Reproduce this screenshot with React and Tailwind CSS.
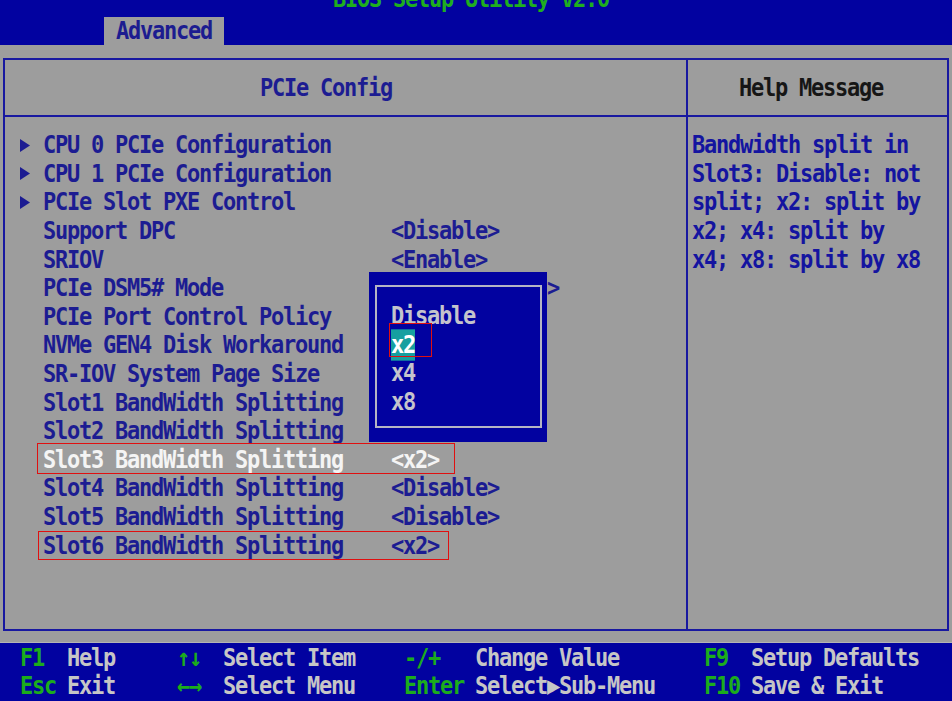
import React from 'react';

const rows = [
    { sub: true, label: 'CPU 0 PCIe Configuration' },
    { sub: true, label: 'CPU 1 PCIe Configuration' },
    { sub: true, label: 'PCIe Slot PXE Control' },
    { label: 'Support DPC', value: '<Disable>' },
    { label: 'SRIOV', value: '<Enable>' },
    { label: 'PCIe DSM5# Mode', value: '             >' },
    { label: 'PCIe Port Control Policy' },
    { label: 'NVMe GEN4 Disk Workaround' },
    { label: 'SR-IOV System Page Size' },
    { label: 'Slot1 BandWidth Splitting' },
    { label: 'Slot2 BandWidth Splitting' },
    { label: 'Slot3 BandWidth Splitting', value: '<x2>', active: true, mark: 'a' },
    { label: 'Slot4 BandWidth Splitting', value: '<Disable>' },
    { label: 'Slot5 BandWidth Splitting', value: '<Disable>' },
    { label: 'Slot6 BandWidth Splitting', value: '<x2>', mark: 'b' },
];

const helpLines = [
    'Bandwidth split in',
    'Slot3: Disable: not',
    'split; x2: split by',
    'x2; x4: split by',
    'x4; x8: split by x8',
];

const footer = [
    { w: 'w-[157px]', kw: 'w-[47px]', items: [['F1', 'Help'], ['Esc', 'Exit']] },
    { w: 'w-[227px]', kw: 'w-[46px]', items: [['↑↓', 'Select Item'], ['←→', 'Select Menu']] },
    { w: 'w-[300px]', kw: 'w-[71px]', items: [['-/+', 'Change Value'], ['Enter', 'Select▶Sub-Menu']] },
    { w: 'w-[240px]', kw: 'w-[47px]', items: [['F9', 'Setup Defaults'], ['F10', 'Save & Exit']] },
];

// BIOS glyphs are taller than DejaVu's, stretch them a little
const tall = 'inline-block scale-y-[1.12]';

const SubArrow = () => (
    <svg width="11" height="13" viewBox="0 0 11 13" className="ml-[1px]">
        <path d="M0 0 L10 6.5 L0 13 Z" fill="#1c1c92" />
    </svg>
);

const Row = ({ row }) => (
    <div className={`relative flex h-[28.6px] items-center whitespace-pre ${row.active ? 'text-[#f4f4f4]' : 'text-[#1c1c92]'}`}>
        <span className="flex w-[24px] items-center">{row.sub && <SubArrow />}</span>
        <span className={`${tall} w-[348px]`}>{row.label}</span>
        {row.value && <span className={tall}>{row.value}</span>}
        {row.mark === 'a' && (
            <div className="absolute left-[18px] top-[-3px] h-[31px] w-[418px] border border-[#e01010]" />
        )}
        {row.mark === 'b' && (
            <div className="absolute left-[19px] top-0 h-[29px] w-[411px] border border-[#e01010]" />
        )}
    </div>
);

const App = () => {
    return (
        <div className="flex h-[701px] w-[952px] flex-col overflow-hidden bg-[#9d9d9d] font-['DejaVu_Sans_Mono',monospace] text-[22px] font-bold leading-[28px] tracking-[-1.24px]">
            {/* title bar */}
            <div className="flex h-[45px] flex-col bg-[#0202a0]">
                <div className="-mt-[15px] h-[28px] pl-[333px] text-[#1fae1f]">
                    <span className={tall}>BIOS Setup Utility V2.0</span>
                </div>
                <div className="ml-[104px] mt-[4px] h-[28px] w-[120px] bg-[#9d9d9d] pl-[12px] text-[#1c1c90]">
                    <span className={tall}>Advanced</span>
                </div>
            </div>

            {/* main frame */}
            <div className="h-[598px] border-b border-[#b4b4b4] pl-[3px] pt-[13px]">
                <div className="flex h-[573px] w-[946px] border-2 border-[#1818a0]">
                    <div className="flex w-[683px] flex-col border-r-2 border-[#1818a0]">
                        <div className="flex h-[57px] items-center border-b-2 border-[#1818a0] pl-[255px] text-[#1c1c92]">
                            <span className={tall}>PCIe Config</span>
                        </div>
                        <div className="relative flex-1 pl-[14px] pt-[14px]">
                            {rows.map((row) => (
                                <Row key={row.label} row={row} />
                            ))}

                            {/* option popup */}
                            <div className="absolute left-[364px] top-[155px] h-[170px] w-[178px] bg-[#0202a0]">
                                <div className="ml-[6px] mt-[13px] h-[143px] w-[167px] border-2 border-[#b4b4c4] pl-[14px] pt-[15px] text-[#c4c4cc]">
                                    <div className="flex h-[28.6px] items-center">
                                        <span className={tall}>Disable</span>
                                    </div>
                                    <div className="flex h-[28.6px] items-center">
                                        <span className={`${tall} bg-[#16a0a0] text-white`}>x2</span>
                                    </div>
                                    <div className="flex h-[28.6px] items-center">
                                        <span className={tall}>x4</span>
                                    </div>
                                    <div className="flex h-[28.6px] items-center">
                                        <span className={tall}>x8</span>
                                    </div>
                                </div>
                                <div className="absolute left-[20px] top-[51px] h-[34px] w-[43px] border border-[#e01010]" />
                            </div>
                        </div>
                    </div>
                    <div className="flex flex-1 flex-col">
                        <div className="flex h-[57px] items-center border-b-2 border-[#1818a0] pl-[51px] text-[#161616]">
                            <span className={tall}>Help Message</span>
                        </div>
                        <div className="pl-[4px] pt-[14px] text-[#1414a0]">
                            {helpLines.map((line) => (
                                <div key={line} className="flex h-[28.6px] items-center whitespace-pre">
                                    <span className={tall}>{line}</span>
                                </div>
                            ))}
                        </div>
                    </div>
                </div>
            </div>

            {/* key legend */}
            <div className="flex flex-1 bg-[#0202a0] pl-[20px] pt-[1px]">
                {footer.map((col) => (
                    <div key={col.items[0][0]} className={col.w}>
                        {col.items.map(([key, text]) => (
                            <div key={key} className="flex h-[28px] items-center whitespace-pre">
                                <span className={`${tall} ${col.kw} text-[#1cac1c]`}>{key}</span>
                                <span className={`${tall} text-[#c6c6c6]`}>{text}</span>
                            </div>
                        ))}
                    </div>
                ))}
            </div>
        </div>
    );
};

export default App;
